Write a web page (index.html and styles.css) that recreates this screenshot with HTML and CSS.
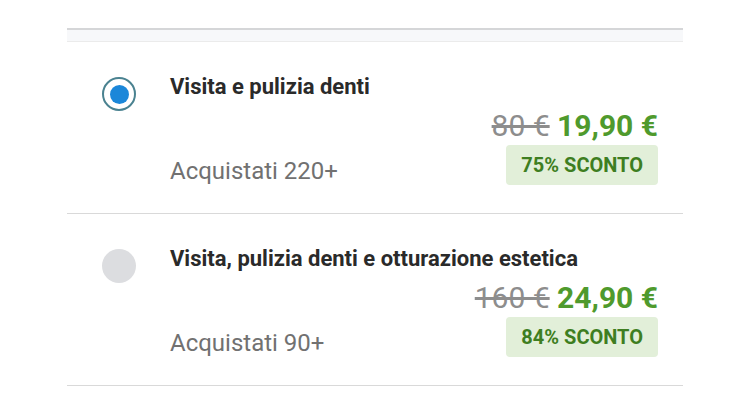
FILE: index.html
```html
<html>
	<head>
		<link rel="stylesheet" href="styles.css">
	</head>
<body>
<div class="page">
	<div class="topband"></div>

	<div class="item">
		<div class="radio checked"><span class="dot"></span></div>
		<div class="title">Visita e pulizia denti</div>
		<div class="row">
			<div class="bought">Acquistati 220+</div>
			<div class="prices">
				<div class="price"><span class="old">80 €</span> <span class="new">19,90 €</span></div>
				<div class="badge">75% SCONTO</div>
			</div>
		</div>
	</div>

	<div class="item">
		<div class="radio"></div>
		<div class="title">Visita, pulizia denti e otturazione estetica</div>
		<div class="row">
			<div class="bought">Acquistati 90+</div>
			<div class="prices">
				<div class="price"><span class="old">160 €</span> <span class="new">24,90 €</span></div>
				<div class="badge">84% SCONTO</div>
			</div>
		</div>
	</div>
</div>
</body>
</html>
```

FILE: styles.css
```css
body{
	margin: 0px;
	background: #fff;
	font-family: Roboto, "Noto Sans", sans-serif;
	overflow: hidden;
}

.page{
	padding: 0px 61px 0px 67px;
}

.topband{
	margin-top: 28px;
	height: 11px;
	background: #f7f8fa;
	border-top: 2px solid #d5d6d8;
	border-bottom: 1px solid #ebebeb;
}

.item{
	display: grid;
	grid-template-columns: 34px 1fr;
	column-gap: 34px;
	padding: 32px 25px 28px 35px;
	border-bottom: 1px solid #d9d9d9;
}

.radio{
	grid-row: 1 / span 2;
	width: 34px;
	height: 34px;
	margin-top: 3px;
	border-radius: 50%;
	background: #dcdde0;
	box-sizing: border-box;
	display: flex;
	align-items: center;
	justify-content: center;
}

.radio.checked{
	background: #fff;
	border: 2px solid #4a8290;
}

.dot{
	width: 19px;
	height: 19px;
	border-radius: 50%;
	background: #1b87d9;
}

.title{
	font-size: 22px;
	line-height: 26px;
	font-weight: bold;
	color: #2a2a2a;
}

.row{
	display: flex;
	justify-content: space-between;
	align-items: flex-end;
	margin-top: 10px;
}

.bought{
	font-size: 24px;
	line-height: 28px;
	color: #717171;
}

.prices{
	display: flex;
	flex-direction: column;
	align-items: flex-end;
	gap: 3px;
}

.price{
	font-size: 30px;
	line-height: 32px;
	white-space: nowrap;
}

.old{
	color: #8d8d8d;
	text-decoration: line-through;
}

.new{
	color: #4f9a2d;
	font-weight: bold;
}

.badge{
	height: 40px;
	padding: 0px 15px;
	display: flex;
	align-items: center;
	background: #e2efd9;
	border-radius: 4px;
	color: #3e7e21;
	font-size: 20px;
	font-weight: bold;
}
```
